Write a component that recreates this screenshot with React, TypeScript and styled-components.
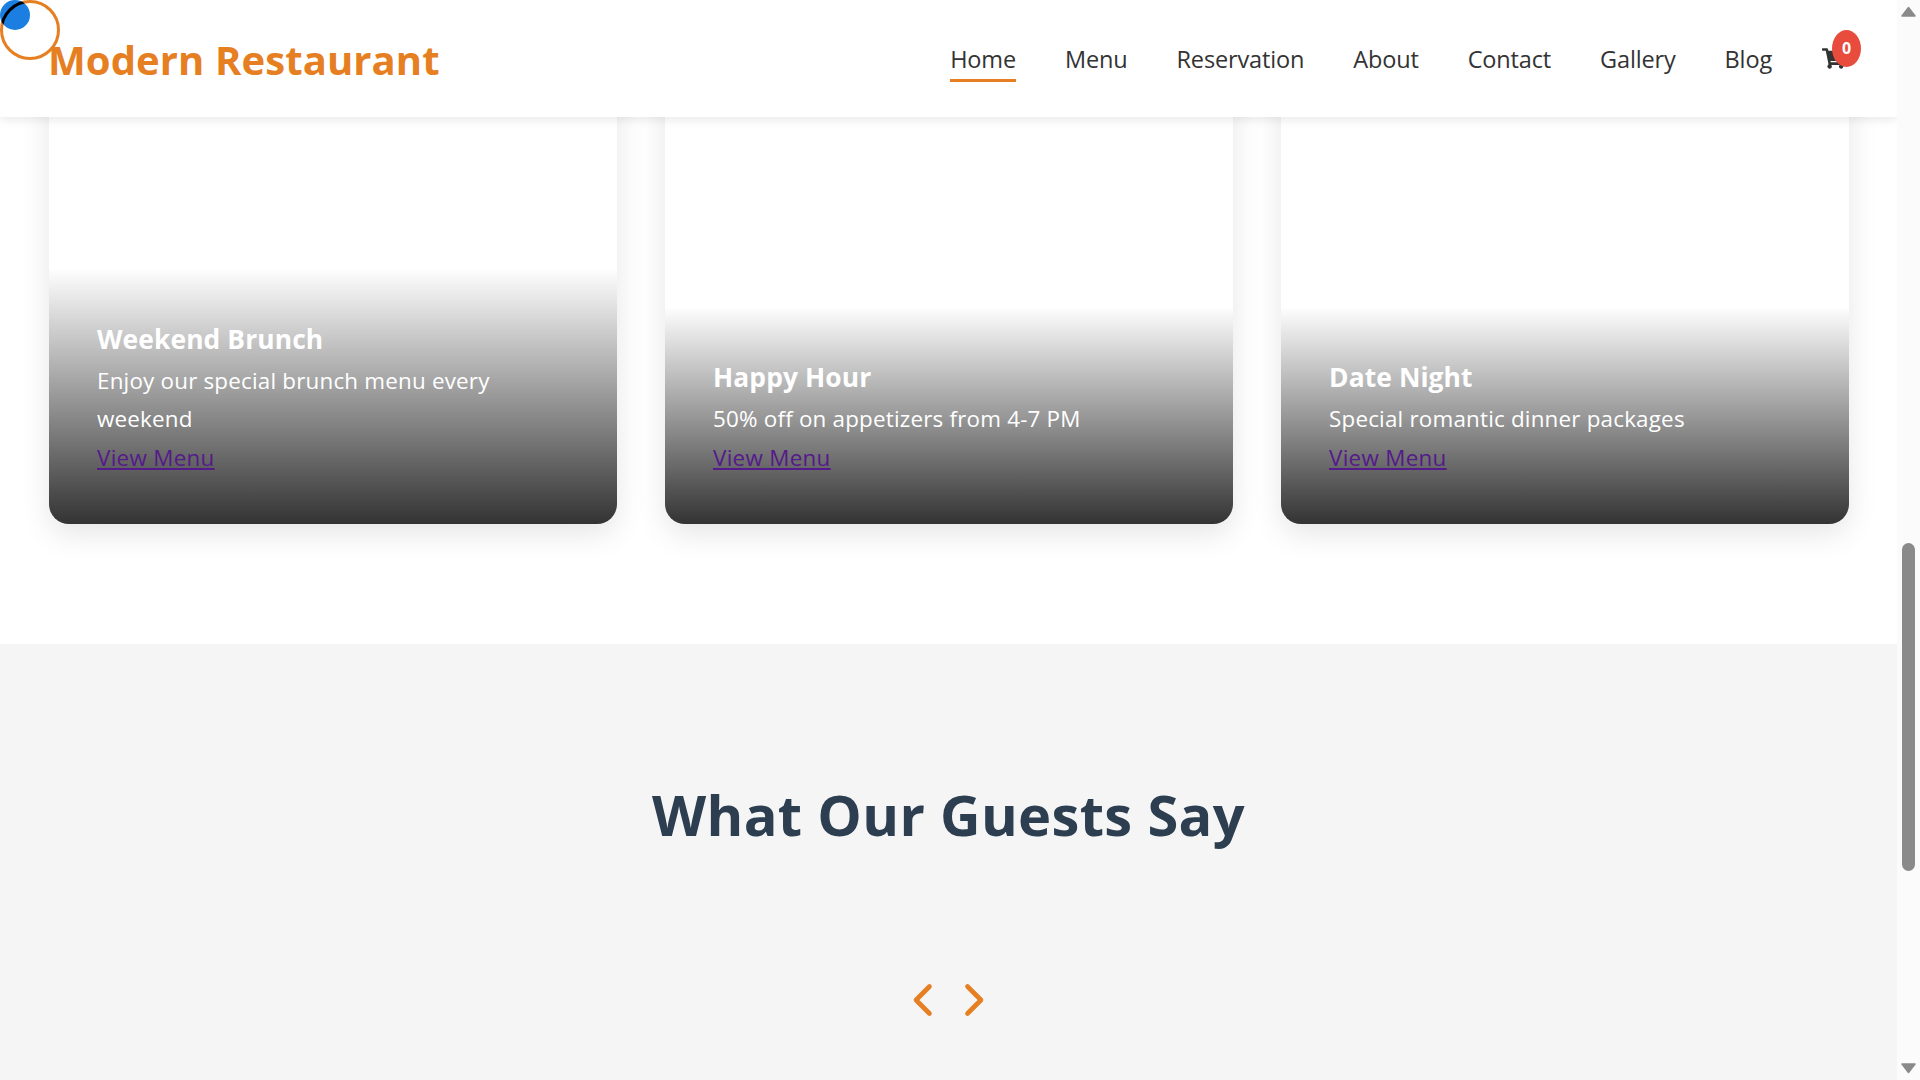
import React from "react";
import styled, { createGlobalStyle } from "styled-components";
import { FaShoppingCart } from "react-icons/fa";

const Global = createGlobalStyle`
  html, body { margin: 0; padding: 0; height: 100%; overflow: hidden; background: #fff; }
  * { box-sizing: border-box; }
  body { font-family: "Open Sans", "Noto Sans", sans-serif; color: #333; }
`;

const Shell = styled.div`
  display: flex;
  width: 1920px;
  height: 1080px;
  overflow: hidden;
`;
const Page = styled.div`
  position: relative;
  width: 1897px;
  height: 1080px;
  overflow: hidden;
  display: flex;
  flex-direction: column;
`;
const Header = styled.header`
  position: relative;
  z-index: 5;
  flex: none;
  height: 117px;
  background: #fff;
  box-shadow: 0 2px 10px rgba(0, 0, 0, 0.1);
  display: flex;
  align-items: center;
  justify-content: space-between;
  padding: 0 48px 0 48px;
`;
const Logo = styled.div`
  font-size: 40px;
  font-weight: 700;
  color: #e67e22;
  letter-spacing: 0.1px;
  margin-top: 2px;
`;
const Nav = styled.nav`
  display: flex;
  align-items: center;
  gap: 49px;
  margin-top: 2px;
`;
const NavLink = styled.a<{ $active?: boolean }>`
  font-size: 23.5px;
  line-height: 30px;
  font-weight: 500;
  color: #333;
  padding: 6px 0 5px;
  letter-spacing: -0.15px;
  border-bottom: 3px solid ${(p) => (p.$active ? "#e67e22" : "transparent")};
`;
const Cart = styled.div`
  position: relative;
  width: 27px;
  height: 23px;
  margin: -2px 0 0 1px;
  color: #333;
  font-size: 23px;
  line-height: 0;
`;
const Badge = styled.span`
  position: absolute;
  top: -17px;
  left: 10px;
  width: 29px;
  height: 37px;
  border-radius: 50%;
  background: #e74c3c;
  color: #fff;
  font-size: 16px;
  font-weight: 700;
  line-height: 37px;
  text-align: center;
`;
const Cards = styled.section`
  flex: none;
  height: 527px;
  padding: 0 48px 120px 49px;
  display: grid;
  grid-template-columns: repeat(3, 568px);
  gap: 48px;
`;
const Card = styled.article`
  margin-top: -40px;
  border-radius: 20px;
  background: #fff;
  box-shadow: 0 10px 30px rgba(0, 0, 0, 0.1);
  display: flex;
  flex-direction: column;
  justify-content: flex-end;
  overflow: hidden;
`;
const Overlay = styled.div`
  padding: 52px 48px 47px;
  background: linear-gradient(transparent, rgba(0, 0, 0, 0.8));
  color: #fff;
`;
const CardTitle = styled.h3`
  margin: 0 0 4px;
  font-size: 26.4px;
  line-height: 38px;
  font-weight: 700;
  letter-spacing: 0.1px;
`;
const CardText = styled.p`
  margin: 0 0 1px;
  font-size: 22.4px;
  line-height: 38px;
  letter-spacing: 0.2px;
`;
const CardLink = styled.a`
  display: block;
  font-size: 22.4px;
  line-height: 38px;
  letter-spacing: 0.3px;
  color: #551a8b;
  text-decoration: underline;
`;
const Testimonials = styled.section`
  flex: 1;
  background: #f5f5f5;
  padding-top: 128px;
  text-align: center;
`;
const Heading = styled.h2`
  margin: 0;
  font-size: 56px;
  line-height: 84px;
  font-weight: 700;
  color: #2c3e50;
  letter-spacing: 0.34px;
`;
const Arrows = styled.div`
  display: flex;
  justify-content: center;
  gap: 25px;
  margin-top: 126px;
  color: #e67e22;
`;
const Ring = styled.div`
  position: absolute;
  top: 0;
  left: 0;
  width: 60px;
  height: 60px;
  border-radius: 50%;
  border: 3px solid #e67e22;
  z-index: 8;
`;
const Cursor = styled.div`
  position: absolute;
  top: 0;
  left: 0;
  width: 30px;
  height: 30px;
  border-radius: 50%;
  background: #1a7fe0;
  overflow: hidden;
  z-index: 9;
`;
const CursorArc = styled.div`
  width: 60px;
  height: 60px;
  border-radius: 50%;
  border: 3px solid #000;
`;
const Scrollbar = styled.div`
  position: relative;
  flex: none;
  width: 23px;
  height: 1080px;
  background: #fbfbfb;
`;
const Thumb = styled.div`
  position: absolute;
  top: 543px;
  left: 5px;
  width: 13px;
  height: 328px;
  border-radius: 7px;
  background: #8a8a8a;
`;
const ArrowUp = styled.svg`
  position: absolute;
  top: 6px;
  left: 4px;
`;
const ArrowDown = styled.svg`
  position: absolute;
  top: 1063px;
  left: 4px;
`;

const links = ["Home", "Menu", "Reservation", "About", "Contact", "Gallery", "Blog"];
const cards = [
  { t: "Weekend Brunch", d: "Enjoy our special brunch menu every weekend" },
  { t: "Happy Hour", d: "50% off on appetizers from 4-7 PM" },
  { t: "Date Night", d: "Special romantic dinner packages" },
];

const Chevron = ({ d }: { d: string }) => (
  <svg width="26" height="36" viewBox="0 0 26 36" fill="none" stroke="currentColor" strokeWidth="4.6" strokeLinecap="round" strokeLinejoin="round">
    <path d={d} />
  </svg>
);

export default function App() {
  return (
    <Shell>
      <Global />
      <Page>
        <Header>
          <Logo>Modern Restaurant</Logo>
          <Nav>
            {links.map((l, i) => (
              <NavLink key={l} $active={i === 0}>{l}</NavLink>
            ))}
            <Cart>
              <FaShoppingCart />
              <Badge>0</Badge>
            </Cart>
          </Nav>
        </Header>
        <Cards>
          {cards.map((c) => (
            <Card key={c.t}>
              <Overlay>
                <CardTitle>{c.t}</CardTitle>
                <CardText>{c.d}</CardText>
                <CardLink>View Menu</CardLink>
              </Overlay>
            </Card>
          ))}
        </Cards>
        <Testimonials>
          <Heading>What Our Guests Say</Heading>
          <Arrows>
            <Chevron d="M19.5 4.5 L6 18 L19.5 31.5" />
            <Chevron d="M6.5 4.5 L20 18 L6.5 31.5" />
          </Arrows>
        </Testimonials>
        <Ring />
        <Cursor>
          <CursorArc />
        </Cursor>
      </Page>
      <Scrollbar>
        <ArrowUp width="15" height="11" viewBox="0 0 15 11"><path d="M7.5 1.5 L14 10 H1 Z" fill="#8a8a8a" stroke="#8a8a8a" strokeWidth="1.5" strokeLinejoin="round" /></ArrowUp>
        <Thumb />
        <ArrowDown width="15" height="11" viewBox="0 0 15 11"><path d="M1 1 H14 L7.5 9.5 Z" fill="#8a8a8a" stroke="#8a8a8a" strokeWidth="1.5" strokeLinejoin="round" /></ArrowDown>
      </Scrollbar>
    </Shell>
  );
}
